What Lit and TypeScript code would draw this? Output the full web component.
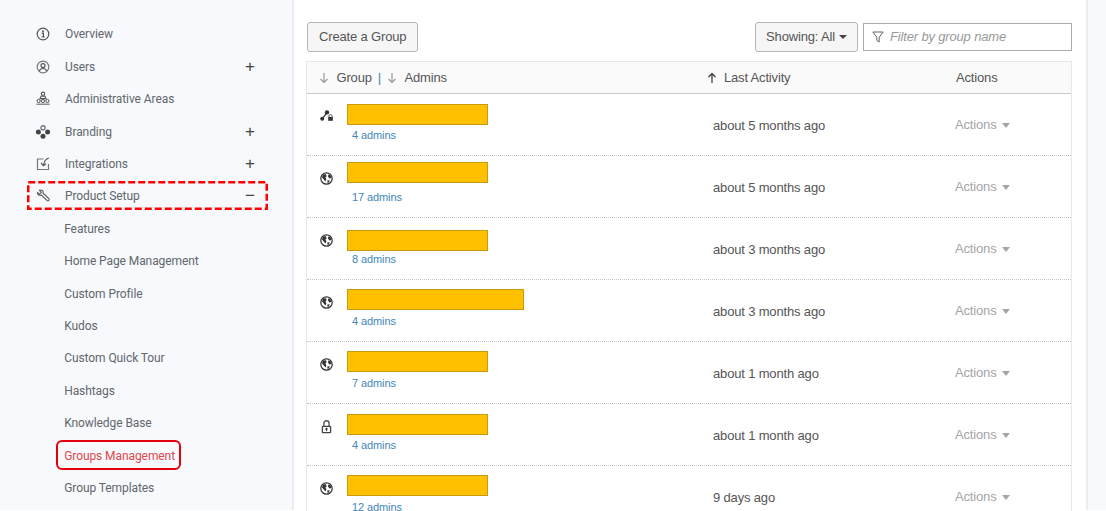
import { LitElement, html, css, svg } from "lit";
import { customElement } from "lit/decorators.js";

const navIcons: Record<string, unknown> = {
  info: svg`<circle cx="8" cy="8" r="5.8" fill="none" stroke="#555" stroke-width="1.2"/><circle cx="8" cy="5.2" r=".9" fill="#444"/><path d="M6.8 7.1H8.4V10.8M6.8 11H9.6" fill="none" stroke="#444" stroke-width="1.1"/>`,
  user: svg`<circle cx="8" cy="8" r="5.8" fill="none" stroke="#777" stroke-width="1.2"/><circle cx="8" cy="6.6" r="2" fill="none" stroke="#555" stroke-width="1.2"/><path d="M4.3 12C5 10 6.3 9.5 8 9.5S11 10 11.7 12" fill="none" stroke="#555" stroke-width="1.2"/>`,
  admin: svg`<circle cx="8" cy="2.8" r="1.7" fill="none" stroke="#555" stroke-width="1.1"/><path d="M5 7.6L6 5.2H10L11 7.6Z" fill="none" stroke="#555" stroke-width="1.1"/><g fill="none" stroke="#555" stroke-width="1"><circle cx="3.6" cy="10" r="1.6"/><circle cx="8" cy="10" r="1.6"/><circle cx="12.4" cy="10" r="1.6"/></g><path d="M1.4 13.2H14.6" stroke="#666" stroke-width="1.1"/>`,
  brand: svg`<circle cx="8" cy="3.8" r="2.1" fill="none" stroke="#5a6a7a" stroke-width="1.2"/><circle cx="3.4" cy="8" r="2.5" fill="#444"/><circle cx="12.6" cy="8" r="2.5" fill="#444"/><circle cx="8" cy="12.2" r="2.5" fill="#444"/>`,
  integ: svg`<path d="M8.5 3H2.5V13.5H13.5V8" fill="none" stroke="#777" stroke-width="1.2"/><path d="M13.8 2C10.5 3 9 5 8.5 9.2M6 7L8.4 9.8L11 7.8" fill="none" stroke="#555" stroke-width="1.2"/>`,
  wrench: svg`<path d="M2.4 4.4L4.6 6.2L6.4 4.4L4.4 2.4C6.6 1.4 8.6 3 8.2 5.2L14 10.8C14.8 11.8 13.2 13.6 12.2 12.6L6.4 7.2C4.2 7.8 2.2 6.4 2.4 4.4Z" fill="none" stroke="#666" stroke-width="1.2" stroke-linejoin="round"/>`,
};

const rowIcons: Record<string, unknown> = {
  tree: svg`<circle cx="7" cy="3.4" r="2.2" fill="#333"/><circle cx="2.2" cy="9.8" r="2" fill="#333"/><path d="M6 5L3 8.6" stroke="#333" stroke-width="1.2"/><path d="M8.9 8.4V7.2A1.6 1.6 0 0 1 12.1 7.2V8.4" fill="none" stroke="#555" stroke-width="1"/><rect x="8.2" y="8" width="4.6" height="3.8" fill="#333"/>`,
  globe: svg`<circle cx="6.5" cy="6.5" r="5.7" fill="#fff" stroke="#333" stroke-width="1.2"/><path d="M3 2.5L6 2.2L6.6 4.2L5.4 5.6L6.4 7.2L5.4 9.4L3.6 7.2L2 5.4Z M8.4 2.2L10.6 3.4L11.4 6L9.4 6.4L8 4.6Z M7.6 8.2L9.8 8.4L8.6 10.8L7.2 10.6Z" fill="#333"/>`,
  lock: svg`<path d="M3.9 6.5V3.4A2.6 2.6 0 0 1 9.1 3.4V6.5" fill="none" stroke="#555" stroke-width="1.4"/><rect x="2.4" y="6.3" width="8.2" height="6.4" rx=".7" fill="#fff" stroke="#444" stroke-width="1.3"/><circle cx="6.5" cy="8.9" r="1.1" fill="#333"/><path d="M6.5 9V11.2" stroke="#333" stroke-width="1.1"/>`,
};

const topNav = [
  ["Overview", "info", ""],
  ["Users", "user", "+"],
  ["Administrative Areas", "admin", ""],
  ["Branding", "brand", "+"],
  ["Integrations", "integ", "+"],
  ["Product Setup", "wrench", "−"],
];
const subNav = ["Features", "Home Page Management", "Custom Profile", "Kudos", "Custom Quick Tour", "Hashtags", "Knowledge Base", "Groups Management", "Group Templates"];

const rows = [
  { icon: "tree", w: 141, top: 10, admins: "4 admins", when: "about 5 months ago" },
  { icon: "globe", w: 141, top: 6, admins: "17 admins", when: "about 5 months ago" },
  { icon: "globe", w: 141, top: 12, admins: "8 admins", when: "about 3 months ago" },
  { icon: "globe", w: 177, top: 9, admins: "4 admins", when: "about 3 months ago" },
  { icon: "globe", w: 141, top: 9, admins: "7 admins", when: "about 1 month ago" },
  { icon: "lock", w: 141, top: 10, admins: "4 admins", when: "about 1 month ago" },
  { icon: "globe", w: 141, top: 9, admins: "12 admins", when: "9 days ago" },
];

const arrow = (up: boolean, color: string) => html`<svg class="arrow" viewBox="0 0 10 12" width="10" height="12"><path d=${up ? "M5 11V1.5M1.5 5L5 1.5L8.5 5" : "M5 1V10.5M1.5 7L5 10.5L8.5 7"} fill="none" stroke=${color} stroke-width="1.2"/></svg>`;

@customElement("app-root")
export class AppRoot extends LitElement {
  static styles = css`
    :host { display: block; height: 100vh; overflow: hidden; background: #fff; font-family: "Liberation Sans", Arial, sans-serif; }
    .page { display: flex; height: calc(100% - 1px); background: #f7f9fc; }
    .side { width: 292px; flex: none; box-sizing: border-box; padding: 18.2px 0 0 27px; font-family: Roboto, sans-serif; font-size: 12px; color: #62676d; letter-spacing: -.08px; }
    .item { position: relative; height: 32.42px; display: flex; align-items: center; }
    .ico { width: 16px; height: 16px; margin-left: 8px; flex: none; }
    .lbl { margin-left: 14px; flex: 1; }
    .sign { width: 10px; margin-right: 37px; font-size: 17px; color: #444; text-align: center; font-family: "Liberation Sans", sans-serif; }
    .sub { padding-left: 37.2px; }
    .dash { position: absolute; left: 0; top: 1px; width: 241px; height: 29px; overflow: visible; }
    .dash rect { fill: none; stroke: #f00; stroke-width: 2.5; stroke-dasharray: 7 3; }
    .item.active { color: #e0474c; }
    .item.active::after { content: ""; position: absolute; left: 29px; top: .5px; width: 125px; height: 30px; box-sizing: border-box; border: 2.5px solid #e4000f; border-radius: 6px; }
    .main { width: 796px; flex: none; box-sizing: border-box; background: #fff; border-left: 2px solid #ebedf0; border-right: 2px solid #ebedf0; padding: 22px 14px 0 13px; font-size: 13px; color: #555; letter-spacing: -.16px; }
    .bar { display: flex; align-items: center; margin-bottom: 9px; }
    .btn { height: 30px; box-sizing: border-box; border: 1px solid #b5b5b5; border-radius: 3px; background: #f6f6f6; color: #555; display: flex; align-items: center; padding: 0 11px 1px; }
    .caret { width: 0; height: 0; border-left: 4px solid transparent; border-right: 4px solid transparent; border-top: 4px solid #444; margin-left: 4px; }
    .showing { margin-left: auto; padding: 0 10px 1px; }
    .filter { width: 209px; height: 28px; margin-left: 5px; box-sizing: border-box; border: 1px solid #aaa; background: #fff; display: flex; align-items: center; padding: 0 0 1px 8px; gap: 6px; color: #999; font-style: italic; }
    .table { width: 766px; box-sizing: border-box; border: 1px solid #e8e8e8; border-bottom: none; margin-left: -1px; }
    .row { display: grid; grid-template-columns: 393px 255px 1fr; height: 62px; box-sizing: border-box; border-bottom: 1px dotted #c4c4c4; position: relative; }
    .head { height: 32px; background: #fafafa; border-bottom: 1px solid #c9c9c9; align-items: center; }
    .head .c1 { display: flex; align-items: center; padding-left: 12px; }
    .head .c2 { display: flex; align-items: center; padding-left: 7px; color: #555; }
    .arrow { flex: none; margin-top: 1px; }
    .sort { margin: 0 4px 0 0; display: flex; }
    .blue { color: #3a87bd; margin: 0 6px; }
    .name { position: relative; padding: 34px 0 0 45px; color: #3f87b8; font-size: 11px; line-height: 14px; letter-spacing: -.1px; }
    .rowico { position: absolute; left: 13px; width: 13px; height: 13px; overflow: visible; }
    .redact { position: absolute; left: 40px; height: 21px; box-sizing: border-box; background: #ffc000; border: 1px solid #c89a10; }
    .when { padding: 24px 0 0 13px; line-height: 15px; }
    .acts { padding: 23px 0 0 0; line-height: 15px; color: #a5a5a5; display: flex; align-items: flex-start; }
    .acts .caret { border-top: 5px solid #a5a5a5; border-left-width: 4.5px; border-right-width: 4.5px; margin: 6px 0 0 5px; }
    .hact { padding-left: 1px; }
  `;

  render() {
    return html`<div class="page">
      <nav class="side">
        ${topNav.map(([label, icon, sign]) => html`<div class="item">
          <svg class="ico" viewBox="0 0 16 16">${navIcons[icon]}</svg>
          <span class="lbl">${label}</span>
          <span class="sign">${sign}</span>
          ${label === "Product Setup" ? html`<svg class="dash" viewBox="0 0 241 29"><rect x="1.25" y="1.25" width="238.5" height="26.5"></rect></svg>` : ""}
        </div>`)}
        ${subNav.map((label) => html`<div class="item sub ${label === "Groups Management" ? "active" : ""}"><span>${label}</span></div>`)}
      </nav>
      <main class="main">
        <div class="bar">
          <div class="btn">Create a Group</div>
          <div class="btn showing">Showing: All<span class="caret"></span></div>
          <div class="filter">
            <svg width="12" height="12" viewBox="0 0 12 12"><path d="M.8 1H11.2L7.2 6.2V11L4.8 9.4V6.2Z" fill="none" stroke="#666"/></svg>
            <span>Filter by group name</span>
          </div>
        </div>
        <div class="table">
          <div class="row head">
            <div class="c1"><span class="sort">${arrow(false, "#999")}</span>&nbsp;Group<span class="blue">|</span><span class="sort">${arrow(false, "#999")}</span>&nbsp;Admins</div>
            <div class="c2">${arrow(true, "#333")}&nbsp;&nbsp;Last Activity</div>
            <div class="hact">Actions</div>
          </div>
          ${rows.map((r) => html`<div class="row">
            <div class="name">
              <svg class="rowico" viewBox="0 0 13 13" style="top:${r.icon === "tree" ? 15 : 16}px">${rowIcons[r.icon]}</svg>
              <div class="redact" style="top:${r.top}px;width:${r.w}px"></div>
              ${r.admins}
            </div>
            <div class="when">${r.when}</div>
            <div class="acts">Actions<span class="caret"></span></div>
          </div>`)}
        </div>
      </main>
    </div>`;
  }
}
